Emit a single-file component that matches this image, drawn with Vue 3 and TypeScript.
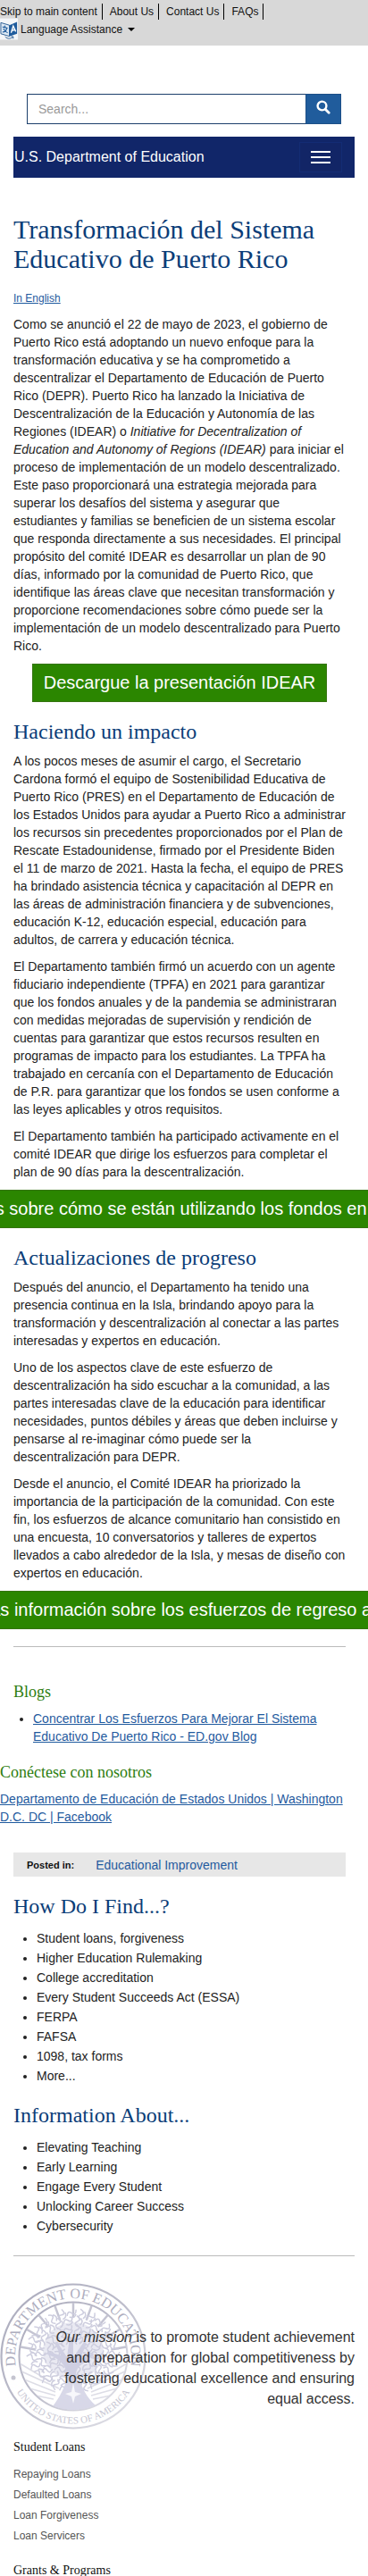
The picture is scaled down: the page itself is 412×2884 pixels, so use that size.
<script setup lang="ts">
const topLinks: string[] = ['Skip to main content', 'About Us', 'Contact Us', 'FAQs']
const findLinks: string[] = [
  'Student loans, forgiveness',
  'Higher Education Rulemaking',
  'College accreditation',
  'Every Student Succeeds Act (ESSA)',
  'FERPA',
  'FAFSA',
  '1098, tax forms',
  'More...',
]
const aboutLinks: string[] = [
  'Elevating Teaching',
  'Early Learning',
  'Engage Every Student',
  'Unlocking Career Success',
  'Cybersecurity',
]
const loanLinks: string[] = ['Repaying Loans', 'Defaulted Loans', 'Loan Forgiveness', 'Loan Servicers']

const rays: number[] = [-80, -60, -40, -20, 0, 20, 40, 60, 80]

// Leaf strokes of the oak tree, spread over its crown in rings.
const leaves = [16, 27, 38, 47].flatMap((radius, ring) =>
  Array.from({ length: 11 + ring * 5 }, (_, i) => {
    const angle = (i / (11 + ring * 5)) * 360 + ring * 11
    const rad = (angle * Math.PI) / 180
    return {
      x: 82 + radius * Math.cos(rad) * 0.98,
      y: 76 + radius * Math.sin(rad) * 0.88,
      angle: angle + (i % 3) * 35,
    }
  }),
)
</script>

<template>
  <div class="page">
    <header>
      <div class="topbar">
        <nav class="top-links" aria-label="Utility">
          <a v-for="link in topLinks" :key="link" href="#">{{ link }}</a>
        </nav>
        <button class="language" type="button">
          <svg class="lang-icon" viewBox="0 0 22 26" aria-hidden="true">
            <rect width="21" height="25" fill="#f4f6f8" />
            <path d="M1 5l10 3v13L1 18z" fill="#dfeaf4" stroke="#2b5d93" />
            <path d="M11 8l9-4v14l-9 3z" fill="#1f5c9d" />
            <path d="M3 10l6 1.500M5.500 8.500l.5 2M8 11c-.5 3-2 5-5 5M4 12c1 2 2.500 4 5 5" fill="none" stroke="#1f5c9d" stroke-width="1.200" />
            <path d="M13 17l2.500-8 3 6.500M13.800 14.500l3.500-1" fill="none" stroke="#fff" stroke-width="1.400" />
            <path d="M6 21.500c3 3 7 2.500 9.500 0M15.500 21.500l-2.500-.3M15.500 21.500v2.300" fill="none" stroke="#2b5d93" />
          </svg>
          <span>Language Assistance</span>
          <i class="caret"></i>
        </button>
      </div>

      <form class="search" role="search" @submit.prevent>
        <input type="text" placeholder="Search..." aria-label="Search" />
        <button type="submit" aria-label="Search">
          <svg viewBox="0 0 16 16" aria-hidden="true">
            <circle cx="6.500" cy="6.500" r="4.900" fill="none" stroke="#fff" stroke-width="2.400" />
            <path d="M10.200 10.200l4 4" stroke="#fff" stroke-width="2.800" stroke-linecap="round" />
          </svg>
        </button>
      </form>

      <div class="navbar">
        <a class="brand" href="#">U.S. Department of Education</a>
        <button class="toggle" type="button" aria-label="Toggle navigation">
          <span></span><span></span><span></span>
        </button>
      </div>
    </header>

    <main>
      <article class="content">
        <h1>Transformación del Sistema Educativo de Puerto Rico</h1>
        <p class="in-english"><a href="#">In English</a></p>
        <p>
          Como se anunció el 22 de mayo de 2023, el gobierno de Puerto Rico está adoptando un nuevo enfoque para la
          transformación educativa y se ha comprometido a descentralizar el Departamento de Educación de Puerto Rico
          (DEPR). Puerto Rico ha lanzado la Iniciativa de Descentralización de la Educación y Autonomía de las Regiones
          (IDEAR) o <em>Initiative for Decentralization of Education and Autonomy of Regions (IDEAR)</em> para iniciar el
          proceso de implementación de un modelo descentralizado. Este paso proporcionará una estrategia mejorada para
          superar los desafíos del sistema y asegurar que estudiantes y familias se beneficien de un sistema escolar que
          responda directamente a sus necesidades. El principal propósito del comité IDEAR es desarrollar un plan de 90
          días, informado por la comunidad de Puerto Rico, que identifique las áreas clave que necesitan transformación y
          proporcione recomendaciones sobre cómo puede ser la implementación de un modelo descentralizado para Puerto
          Rico.
        </p>
        <div class="action"><a href="#">Descargue la presentación IDEAR</a></div>

        <h2>Haciendo un impacto</h2>
        <p>
          A los pocos meses de asumir el cargo, el Secretario Cardona formó el equipo de Sostenibilidad Educativa de
          Puerto Rico (PRES) en el Departamento de Educación de los Estados Unidos para ayudar a Puerto Rico a
          administrar los recursos sin precedentes proporcionados por el Plan de Rescate Estadounidense, firmado por el
          Presidente Biden el 11 de marzo de 2021. Hasta la fecha, el equipo de PRES ha brindado asistencia técnica y
          capacitación al DEPR en las áreas de administración financiera y de subvenciones, educación K-12, educación
          especial, educación para adultos, de carrera y educación técnica.
        </p>
        <p>
          El Departamento también firmó un acuerdo con un agente fiduciario independiente (TPFA) en 2021 para garantizar
          que los fondos anuales y de la pandemia se administraran con medidas mejoradas de supervisión y rendición de
          cuentas para garantizar que estos recursos resulten en programas de impacto para los estudiantes. La TPFA ha
          trabajado en cercanía con el Departamento de Educación de P.R. para garantizar que los fondos se usen conforme
          a las leyes aplicables y otros requisitos.
        </p>
        <p>
          El Departamento también ha participado activamente en el comité IDEAR que dirige los esfuerzos para completar
          el plan de 90 días para la descentralización.
        </p>
        <div class="action">
          <a href="#">Más ejemplos sobre cómo se están utilizando los fondos en Puerto Rico</a>
        </div>

        <h2>Actualizaciones de progreso</h2>
        <p>
          Después del anuncio, el Departamento ha tenido una presencia continua en la Isla, brindando apoyo para la
          transformación y descentralización al conectar a las partes interesadas y expertos en educación.
        </p>
        <p>
          Uno de los aspectos clave de este esfuerzo de descentralización ha sido escuchar a la comunidad, a las partes
          interesadas clave de la educación para identificar necesidades, puntos débiles y áreas que deben incluirse y
          pensarse al re-imaginar cómo puede ser la descentralización para DEPR.
        </p>
        <p>
          Desde el anuncio, el Comité IDEAR ha priorizado la importancia de la participación de la comunidad. Con este
          fin, los esfuerzos de alcance comunitario han consistido en una encuesta, 10 conversatorios y talleres de
          expertos llevados a cabo alrededor de la Isla, y mesas de diseño con expertos en educación.
        </p>
        <div class="action">
          <a href="#">Obtenga más información sobre los esfuerzos de regreso a la escuela</a>
        </div>
        <hr />

        <h3>Blogs</h3>
        <ul class="blogs">
          <li><a href="#">Concentrar Los Esfuerzos Para Mejorar El Sistema Educativo De Puerto Rico - ED.gov Blog</a></li>
        </ul>
      </article>

      <section class="connect">
        <h3>Conéctese con nosotros</h3>
        <p><a href="#">Departamento de Educación de Estados Unidos | Washington D.C. DC | Facebook</a></p>
      </section>

      <div class="posted">
        <strong>Posted in:</strong>
        <a href="#">Educational Improvement</a>
      </div>

      <section class="links">
        <h2>How Do I Find...?</h2>
        <ul>
          <li v-for="link in findLinks" :key="link"><a href="#">{{ link }}</a></li>
        </ul>
      </section>
      <section class="links">
        <h2>Information About...</h2>
        <ul>
          <li v-for="link in aboutLinks" :key="link"><a href="#">{{ link }}</a></li>
        </ul>
      </section>
    </main>

    <footer>
      <hr />
      <div class="mission">
        <svg class="seal" viewBox="0 0 164 164" aria-hidden="true">
          <defs>
            <linearGradient id="seal-fade" x1="0" y1="0" x2="1" y2="1">
              <stop offset="0" stop-color="#a9a9bb" />
              <stop offset=".5" stop-color="#bdbdcb" />
              <stop offset="1" stop-color="#e6e6ec" />
            </linearGradient>
            <path id="arc-top" d="M18.700 97A65 65 0 1 1 145.300 97" />
            <path id="arc-bottom" d="M11 104.300A74 74 0 0 0 153 104.300" />
            <clipPath id="seal-inner"><circle cx="82" cy="82" r="60" /></clipPath>
          </defs>
          <circle cx="82" cy="82" r="80.500" fill="none" stroke="url(#seal-fade)" stroke-width="2.200" />
          <circle cx="82" cy="82" r="60.500" fill="none" stroke="url(#seal-fade)" stroke-width="2" />
          <g clip-path="url(#seal-inner)">
            <path
              v-for="ray in rays"
              :key="ray"
              d="M82 22v17"
              stroke="#c4c4d2"
              stroke-width="2.500"
              :transform="`rotate(${ray} 82 82)`"
            />
            <path
              d="M22 98l44 20M22 106l40 16M26 116l36 10M30 124l30 6M142 98l-44 20M142 106l-40 16M138 116l-36 10M134 124l-30 6M22 90l34 20M142 90l-34 20"
              stroke="#dddde6"
              stroke-width="1.600"
            />
            <ellipse cx="82" cy="76" rx="34" ry="32" fill="#e9e9f2" />
            <g fill="none" stroke="#cdcdde" stroke-width="1.500">
              <path
                v-for="(leaf, i) in leaves"
                :key="i"
                d="M-6 0q3-6 6-1t6-2M-4 2q4 4 8 0"
                :transform="`translate(${leaf.x} ${leaf.y}) rotate(${leaf.angle})`"
              />
            </g>
            <path
              d="M75 112c2-14-3-22-14-29l-8-3 1-3 14 4-7-14 3-1 11 17 3-22 4 1v21l12-17 3 2-8 18 15-8 1 3-15 11c-6 6-6 12-3 20z"
              fill="#cfcfe2"
            />
            <path d="M56 142c8-10 14-20 18-31h16c4 11 10 21 21 29-14 12-42 12-55 2z" fill="#d8d8e8" />
            <path d="M82 112l2 10 7 2-7 3-2 8-2-8-7-3 7-2z" fill="#f7f7fb" />
          </g>
          <text class="seal-top" fill="#adadbe">
            <textPath href="#arc-top" startOffset="50%" text-anchor="middle">DEPARTMENT OF EDUCATION</textPath>
          </text>
          <text class="seal-bottom" fill="#c6c6d2">
            <textPath href="#arc-bottom" startOffset="50%" text-anchor="middle">UNITED STATES OF AMERICA</textPath>
          </text>
          <circle cx="15" cy="106" r="2.500" fill="#c5c5d0" />
        </svg>
        <p><em>Our mission</em> is to promote student achievement and preparation for global competitiveness by fostering educational excellence and ensuring equal access.</p>
      </div>
      <section class="foot-group">
        <h4>Student Loans</h4>
        <ul>
          <li v-for="link in loanLinks" :key="link"><a href="#">{{ link }}</a></li>
        </ul>
      </section>
      <section class="foot-group">
        <h4>Grants &amp; Programs</h4>
      </section>
    </footer>
  </div>
</template>

<style>
body {
  margin: 0;
  background: #fff;
}
</style>

<style scoped>
.page {
  overflow-x: clip;
  color: #222;
  font: 14px/20px "Liberation Sans", Arial, sans-serif;
}
* {
  box-sizing: border-box;
}
a {
  color: #1f5a9e;
}
button {
  font: inherit;
  border: 0;
  padding: 0;
}
h1, h2, h3, h4 {
  margin: 0;
  font-family: "Liberation Serif", "Times New Roman", serif;
  font-weight: 400;
}
h1 {
  color: #0b3d78;
  font-size: 30px;
  line-height: 33px;
}
h2 {
  margin: 20px 0 10px;
  color: #0b3d78;
  font-size: 24px;
  line-height: 26px;
}
h3 {
  margin: 0 0 10px;
  color: #2e7d0f;
  font-size: 18px;
  line-height: 20px;
}
p {
  margin: 0 0 10px;
}
ul {
  margin: 0;
}
hr {
  margin: 0;
  border: 0;
  border-top: 1px solid #bbb;
}

.topbar {
  height: 51px;
  padding-top: 3px;
  background: #d8d8d8;
  font-size: 12px;
}
.top-links {
  display: flex;
  height: 20px;
  align-items: center;
  gap: 8px;
}
.top-links a {
  padding-right: 5px;
  border-right: 1px solid #000;
  color: #111;
  line-height: 18px;
  text-decoration: none;
}
.language {
  display: flex;
  align-items: center;
  gap: 2px;
  height: 20px;
  background: none;
  color: #111;
}
.lang-icon {
  width: 21px;
  height: 26px;
}
.caret {
  margin-left: 4px;
  border: 4px solid transparent;
  border-top-color: #000;
  border-bottom: 0;
}

.search {
  display: flex;
  height: 34px;
  margin: 54px 30px 14px;
}
.search input {
  flex: 1;
  min-width: 0;
  padding: 0 12px;
  border: 1px solid #1c3f6b;
  border-right: 0;
  border-radius: 0;
  background: #fff;
  color: #333;
  font: inherit;
}
.search input::placeholder {
  color: #999;
}
.search button {
  width: 40px;
  border: 1px solid #1c4f87;
  background: #205c9c;
}
.search svg {
  width: 16px;
  height: 16px;
}

.navbar {
  display: flex;
  align-items: center;
  justify-content: space-between;
  height: 46px;
  margin: 0 15px;
  padding: 0 14px 0 1px;
  background: #112669;
}
.brand {
  color: #fff;
  font-size: 16px;
  text-decoration: none;
}
.toggle {
  display: flex;
  flex-direction: column;
  align-items: center;
  justify-content: center;
  gap: 4px;
  width: 48px;
  height: 34px;
  border: 1px solid #132c74;
  background: #122566;
}
.toggle span {
  width: 22px;
  height: 2px;
  background: #fff;
}

.content {
  padding: 41px 25px 0 15px;
}
.in-english {
  margin: 18px 0 9px;
  font-size: 12px;
}
.action {
  display: flex;
  justify-content: center;
}
.action a {
  flex: none;
  padding: 9px 12px 10px;
  border: 1px solid #35740f;
  background: #2b8600;
  color: #fff;
  font-size: 20px;
  line-height: 22px;
  text-decoration: none;
  white-space: nowrap;
}
.content hr {
  margin: 19px 0 40px;
}
.blogs {
  padding-left: 22px;
}
.connect {
  padding: 20px 15px 0 0;
}
.connect p {
  margin: 0;
}
.posted {
  display: flex;
  align-items: center;
  gap: 24px;
  height: 27px;
  margin: 30px 25px 0 15px;
  padding-left: 15px;
  background: #e7e7e7;
}
.posted strong {
  color: #111;
  font-size: 11px;
}
.posted a {
  text-decoration: none;
}
.links {
  padding: 0 15px;
}
.links ul {
  padding: 2px 0 0 26px;
}
.links li {
  line-height: 22px;
}
.links a {
  color: #222;
  text-decoration: none;
}

footer {
  padding: 22px 15px 0;
}
.mission {
  position: relative;
  padding: 79px 0 35px;
}
.mission p {
  position: relative;
  margin: 0;
  padding-left: 45px;
  color: #333;
  font-size: 16px;
  line-height: 23px;
  text-align: right;
}
.seal {
  position: absolute;
  top: 30px;
  left: -15px;
  width: 164px;
  height: 164px;
}
.seal text {
  font-family: "Liberation Serif", serif;
}
.seal-top {
  font-size: 16px;
}
.seal-bottom {
  font-size: 11px;
}
.foot-group {
  min-height: 138px;
}
.foot-group + .foot-group {
  min-height: 0;
}
.foot-group h4 {
  color: #111;
  font-size: 14px;
  line-height: 16px;
}
.foot-group ul {
  padding: 10px 0 0;
  list-style: none;
}
.foot-group li {
  line-height: 22px;
}
.foot-group a {
  color: #555;
  font-size: 12px;
  text-decoration: none;
}
</style>
